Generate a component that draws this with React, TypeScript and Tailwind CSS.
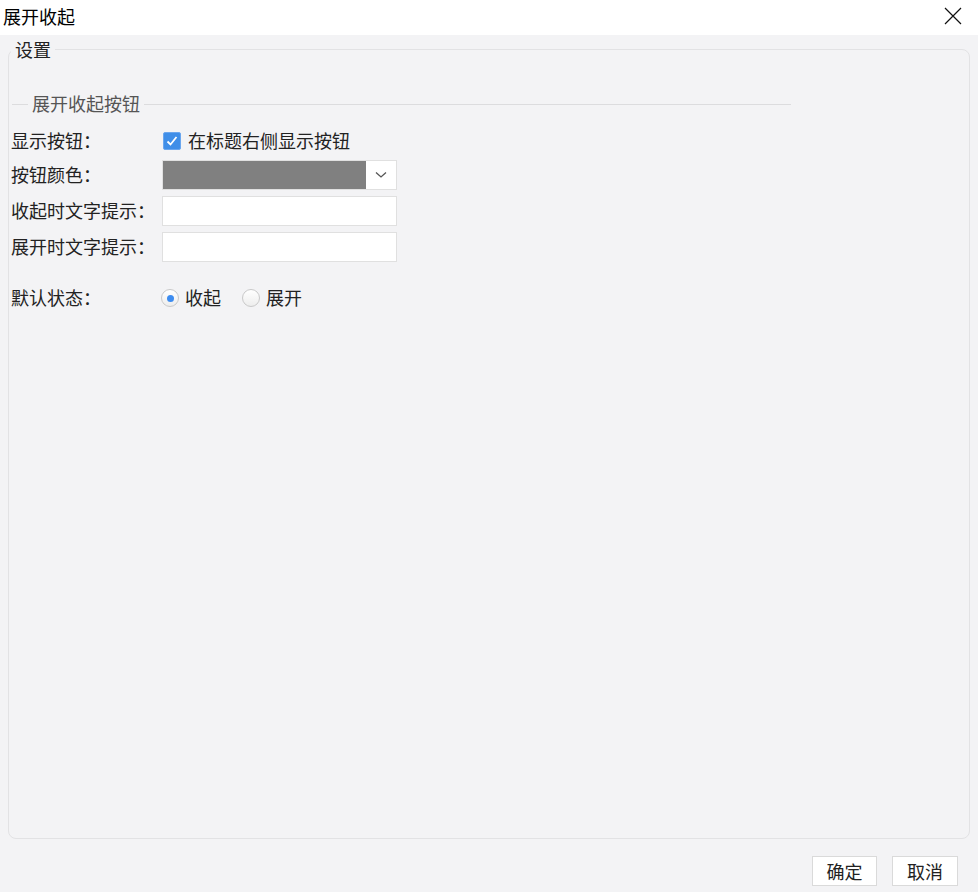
import React, { useState } from 'react';

const font = "font-['Noto_Sans_CJK_SC','Noto_Sans',sans-serif]";

const Label = ({ children }: { children: React.ReactNode }) => (
  <div className="w-[151px] shrink-0 text-[18px] leading-[24px] text-[#222] -translate-y-px">{children}</div>
);

const Radio = ({ checked, label, onClick }: { checked: boolean; label: string; onClick: () => void }) => (
  <button type="button" onClick={onClick} className="flex items-center gap-[6px]">
    <span className="w-[18px] h-[18px] rounded-full border border-[#c9c9c9] bg-gradient-to-b from-white to-[#ededed] flex items-center justify-center">
      {checked && <span className="w-[7px] h-[7px] rounded-full bg-[#3d8cf0]" />}
    </span>
    <span className="text-[18px] leading-[24px] text-[#222] -translate-y-px">{label}</span>
  </button>
);

export default function App() {
  const [showBtn, setShowBtn] = useState(true);
  const [state, setState] = useState<'collapse' | 'expand'>('collapse');

  return (
    <div className={`w-[978px] h-[892px] bg-[#f3f3f5] flex flex-col ${font}`}>
      {/* title bar */}
      <div className="h-[35px] bg-white flex items-center justify-between shrink-0">
        <span className="pl-[3px] pb-[4px] text-[18px] leading-[24px] text-black">展开收起</span>
        <svg width="18" height="18" viewBox="0 0 18 18" className="mr-[16px] -mt-[4px]">
          <path d="M1 1 L17 17 M17 1 L1 17" stroke="#111" strokeWidth="1.2" fill="none" />
        </svg>
      </div>

      {/* settings group */}
      <fieldset className="mx-[8px] mt-[3px] h-[801px] border border-[#e2e2e4] rounded-lg">
        <legend className="ml-[2px] px-[4px] text-[18px] leading-[22px] text-[#222]">设置</legend>

        <div className="mt-[32px] ml-[3px] w-[779px] h-[24px] flex items-center">
          <div className="w-[16px] h-px bg-[#dcdcde]" />
          <span className="px-[4px] text-[18px] leading-[24px] text-[#555] -translate-y-px">展开收起按钮</span>
          <div className="flex-1 h-px bg-[#dcdcde]" />
        </div>

        <div className="pl-[2px] mt-[10px] flex flex-col">
          <div className="h-[30px] flex items-center">
            <Label>显示按钮：</Label>
            <button type="button" onClick={() => setShowBtn(!showBtn)} className="ml-[1px] flex items-center gap-[7px]">
              <span className="w-[18px] h-[18px] rounded-[2px] bg-[#3f8ee8] border border-[#6aa6ee] flex items-center justify-center">
                {showBtn && (
                  <svg width="14" height="14" viewBox="0 0 14 14">
                    <path d="M2.5 7.5 L5.5 10.5 L11.5 3" stroke="white" strokeWidth="1.8" fill="none" />
                  </svg>
                )}
              </span>
              <span className="text-[18px] leading-[24px] text-[#222] -translate-y-px">在标题右侧显示按钮</span>
            </button>
          </div>

          <div className="mt-[4px] h-[30px] flex items-center">
            <Label>按钮颜色：</Label>
            <div className="w-[235px] h-[30px] flex border border-[#e0e0e0] bg-white">
              <div className="flex-1 bg-[#808080]" />
              <div className="w-[30px] flex items-center justify-center">
                <svg width="12" height="8" viewBox="0 0 12 8">
                  <path d="M1 1.5 L6 6 L11 1.5" stroke="#555" strokeWidth="1.3" fill="none" />
                </svg>
              </div>
            </div>
          </div>

          <div className="mt-[6px] h-[30px] flex items-center">
            <Label>收起时文字提示：</Label>
            <input className="w-[235px] h-[30px] border border-[#e0e0e0] bg-white outline-none px-2 text-[16px]" />
          </div>

          <div className="mt-[6px] h-[30px] flex items-center">
            <Label>展开时文字提示：</Label>
            <input className="w-[235px] h-[30px] border border-[#e0e0e0] bg-white outline-none px-2 text-[16px]" />
          </div>

          <div className="mt-[21px] h-[30px] flex items-center">
            <Label>默认状态：</Label>
            <div className="-ml-[1px] flex items-center gap-[21px]">
              <Radio checked={state === 'collapse'} label="收起" onClick={() => setState('collapse')} />
              <Radio checked={state === 'expand'} label="展开" onClick={() => setState('expand')} />
            </div>
          </div>
        </div>
      </fieldset>

      {/* footer */}
      <div className="mt-[17px] flex justify-end gap-[15px] pr-[20px]">
        <button type="button" className="w-[65px] h-[30px] bg-white border border-[#dadada] text-[18px] leading-[24px] text-[#222]">确定</button>
        <button type="button" className="w-[66px] h-[30px] bg-white border border-[#dadada] text-[18px] leading-[24px] text-[#222]">取消</button>
      </div>
    </div>
  );
}
